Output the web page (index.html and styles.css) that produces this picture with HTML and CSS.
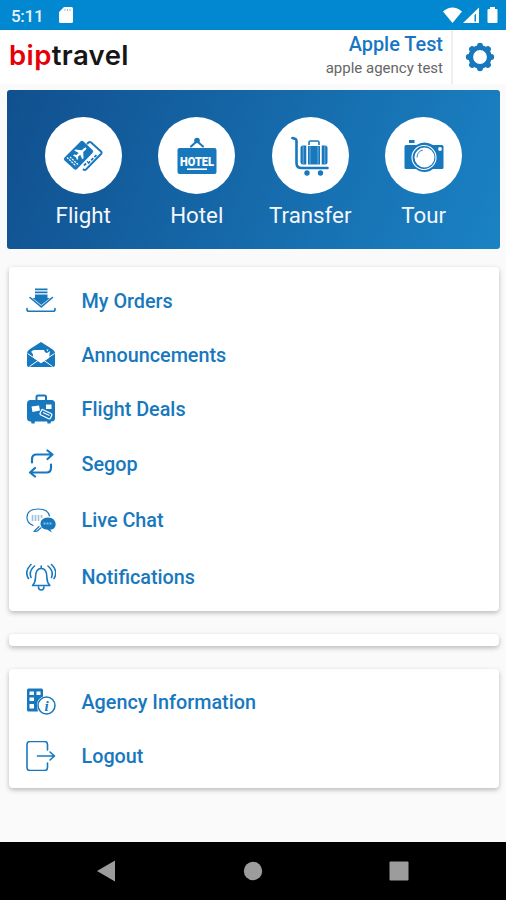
FILE: index.html
```html
<!DOCTYPE html>
<html lang="en">
<head>
  <meta charset="UTF-8">
  <meta name="viewport" content="width=device-width, initial-scale=1">
  <title>biptravel</title>
  <link rel="stylesheet" href="styles.css">
</head>
<body>

  <!-- Status bar -->
  <div class="status-bar">
    <span class="time">5:11</span>
    <svg class="sd-card" width="14" height="16" viewBox="0 0 14 16"><path fill="#fff" d="M5 0h7.500a1.500 1.500 0 0 1 1.500 1.500v13a1.500 1.500 0 0 1-1.500 1.500h-11A1.500 1.500 0 0 1 0 14.500V5z"/><path stroke="#7fc2e6" stroke-width="1" d="M6 2v2M8.500 2v2M11 2v2"/></svg>
    <svg class="signals" width="56" height="18" viewBox="0 0 56 18" fill="#fff">
      <path d="M1 5.500Q10.500-2.500 20 5.500L10.500 17z"/>
      <path d="M21 17L37 1.500V17zM32.500 9v6.500h1.500V7.500z" fill-rule="evenodd"/>
      <path d="M48 1h5v2h1.500q1 0 1 1v12q0 1-1 1h-8q-1 0-1-1V4q0-1 1-1H48z"/>
    </svg>
  </div>

  <!-- Header -->
  <div class="header">
    <div class="logo"><span>bip</span>travel</div>
    <div class="user">
      <div class="user-name">Apple Test</div>
      <div class="agency">apple agency test</div>
    </div>
    <div class="settings">
      <svg width="30" height="30" viewBox="0 0 30 30">
        <circle cx="15" cy="15" r="9.300" fill="none" stroke="#1878be" stroke-width="4.800"/>
        <path stroke="#1878be" stroke-width="6" stroke-linecap="round" d="M15 3.800v1M15 25.200v1M3.800 15h1M25.200 15h1M7.100 7.100l.7.700M22.200 22.200l.7.700M22.900 7.100l-.7.700M7.800 22.200l-.7.700"/>
      </svg>
    </div>
  </div>

  <!-- Main services -->
  <div class="services">
    <div class="service">
      <div class="circle">
        <svg width="40" height="32" viewBox="0 0 40 32">
          <path fill="#1878be" d="M17.500 1.500q1.500-1.500 3 0l9 8.500q1.500 1.500 0 3L14 29q-1.500 1.500-3 0L1.500 20.500q-1.500-1.500 0-3z"/>
          <path fill="none" stroke="#1878be" stroke-width="1.900" d="M24 4l1.500-1.500q1.300-1.200 2.600 0L38 11.500q1.200 1.200 0 2.500L23 29.500q-1.500 1-3-.5"/>
          <path stroke="#1878be" stroke-width="1.800" stroke-dasharray="3 1.500" d="M21 25.500l4-4M25 23.500l9-9"/>
          <g transform="translate(18 12.500) rotate(-42)" fill="#fff"><path d="M7 0Q7-1.100 5-1.100H2L-2-6h-1.600l1.500 4.900H-5L-6.500-3H-8l1 3-1 3h1.500L-5 1.100h2.900L-3.600 6H-2l4-4.900h3Q7 1.100 7 0z"/></g>
          <path stroke="#fff" stroke-width="1.200" stroke-dasharray="2 1" d="M4 17.500l9 8.500M7 17l8 7.500"/>
        </svg>
      </div>
      <span>Flight</span>
    </div>
    <div class="service">
      <div class="circle">
        <svg width="40" height="38" viewBox="0 0 40 38">
          <path fill="none" stroke="#1878be" stroke-width="2" stroke-linecap="round" d="M14 9.500l5-4.500h2l5 4.500"/>
          <circle cx="20" cy="3.500" r="2.800" fill="#1878be"/>
          <rect x=".5" y="11" width="39" height="26" rx="2" fill="#1878be"/>
          <text class="hotel-text" x="20" y="28.500" textLength="34" lengthAdjust="spacingAndGlyphs">HOTEL</text>
          <path stroke="#fff" stroke-width="1.600" d="M10 32.200h20"/>
        </svg>
      </div>
      <span>Hotel</span>
    </div>
    <div class="service">
      <div class="circle">
        <svg width="38" height="40" viewBox="0 0 38 40">
          <path fill="none" stroke="#1878be" stroke-width="2.600" stroke-linecap="round" stroke-linejoin="round" d="M1.500 2l3 1q1 .5 1 2v22q0 5 5 5H36.500"/>
          <path fill="none" stroke="#1878be" stroke-width="1.600" d="M18 9V6.500Q18 5 19.500 5h7Q28 5 28 6.500V9"/>
          <rect x="17" y="10" width="12" height="18.500" fill="#1878be"/>
          <path fill="#1878be" d="M15.300 9.500v19H12q-2.500 0-2.500-2.500V12q0-2.500 2.500-2.500zM30.700 9.500H34q2.500 0 2.500 2.500v14q0 2.500-2.500 2.500h-3.300z"/>
          <path stroke="#fff" stroke-width=".4" d="M12.200 10v18M33.800 10v18M19 10v18M27 10v18"/>
          <circle cx="16" cy="37" r="2.700" fill="#1878be"/>
          <circle cx="29.500" cy="37" r="2.700" fill="#1878be"/>
        </svg>
      </div>
      <span>Transfer</span>
    </div>
    <div class="service">
      <div class="circle">
        <svg width="40" height="34" viewBox="0 0 40 34">
          <path fill="#1878be" d="M5 1h5.500v3H5zM2 6h10.500Q16 3.500 20.500 3.500T29 6h9q1.500 0 1.500 1.500v21q0 1.500-1.500 1.500H29q-3.500 3-8.500 3T12 30H2Q.5 30 .5 28.500v-21Q.5 6 2 6z"/>
          <circle cx="20" cy="18.500" r="12" fill="none" stroke="#fff" stroke-width="1.100"/>
          <circle cx="20.500" cy="18.500" r="10" fill="#fff"/>
          <path fill="none" stroke="#1878be" stroke-width=".9" d="M13 18.500q.2-6 6-7.500"/>
          <circle cx="36" cy="10" r="1.900" fill="#fff"/>
        </svg>
      </div>
      <span>Tour</span>
    </div>
  </div>

  <!-- Main menu -->
  <div class="card menu">
    <a class="item">
      <svg width="30" height="30" viewBox="0 0 30 30">
        <path fill="#1878be" d="M9 2.500h12.500v1.800H9zM9 5.500h12.500v1.800H9zM9 8.500h12.500v3.500H24l-8.700 7-8.800-7H9z"/>
        <path class="line" d="M4 11.500l11.300 9.300L26.500 11.500"/>
        <path class="line" d="M1 22.500v1q0 1.800 2 1.800h24q2 0 2-1.800v-1"/>
      </svg>
      <span>My Orders</span>
    </a>
    <a class="item">
      <svg width="30" height="30" viewBox="0 0 30 30">
        <path fill="#1878be" d="M15 2l11 7q3 2 3 4v12q0 2-2 2H3q-2 0-2-2V13q0-2 3-4z"/>
        <path fill="#fff" d="M5 12q1.500-2 3.500-2H18q1 3.500 3 3l3-2-1 7-7.500 5q-.5.300-1 0L7 17.500Q7.500 13 5 12zM20.500 9.500h2l-1.200 2z"/>
        <path fill="none" stroke="#fff" stroke-width="1" d="M1.500 13.500L12 20.500 3.500 26.500M28.500 13.500L18 20.500l8.500 6"/>
      </svg>
      <span>Announcements</span>
    </a>
    <a class="item">
      <svg width="30" height="30" viewBox="0 0 30 30">
        <rect x="1" y="6" width="28" height="21.500" rx="3.500" fill="#1878be"/>
        <path fill="none" stroke="#1878be" stroke-width="2" d="M10.500 7V3Q10.500 1.500 12 1.500h6.500Q20 1.500 20 3v4"/>
        <path fill="#1878be" d="M5 27h4l-.5 2.500h-3zM21 27h4l-.5 2.500h-3z"/>
        <path fill="#fff" d="M5.500 12.500l7.500-1 1 5-7.500 1.500zM20 10.500h5.500v4.500H20z"/>
        <path fill="#1878be" stroke="#fff" stroke-width="1.300" d="M16.500 15.500l8.500 4q1.500 1 .5 2.500l-1 2q-.7 1.300-2.300.5L15 21q-1.500-.8-.7-2.200l1-2q.5-1.200 1.200-1.300z"/>
        <path stroke="#fff" stroke-width="1.200" d="M17 18.500l6.500 3"/>
      </svg>
      <span>Flight Deals</span>
    </a>
    <a class="item tall">
      <svg width="30" height="30" viewBox="0 0 30 30">
        <path class="line bold" d="M6 13.500V10q0-4.500 4.500-4.500H26M21.500 1.500l5 4-5 4.500M25 15.500V19q0 4.500-4.500 4.500H4.500M9 19l-5 4.500 5 4"/>
      </svg>
      <span>Segop</span>
    </a>
    <a class="item tall">
      <svg width="30" height="30" viewBox="0 0 30 30">
        <path class="line thin" d="M7 19.500q-6-2.500-6-8Q1 3 12.500 3q9.500 0 11 7M13 20.500L8 25.500l3-.3 4-3.500"/>
        <path stroke="#1878be" stroke-opacity=".45" stroke-width="1.600" d="M6.500 9v6M9.500 9v6M12.500 9v6M15.500 9v3"/>
        <path fill="#1878be" d="M21.800 11.500c10 0 10 12 2.500 12l1.700 3-5-3c-9-.5-8.500-12 .8-12z"/>
        <path stroke="#fff" stroke-opacity=".5" stroke-width="1.800" stroke-dasharray="2 1" d="M17.500 17.500h8"/>
      </svg>
      <span>Live Chat</span>
    </a>
    <a class="item tall">
      <svg width="30" height="30" viewBox="0 0 30 30">
        <path class="line" d="M6.500 23.500q3-3 3-8 0-9 5.700-9t5.700 9q0 5 3 8zM15.200 6.500V4M12.500 25q0 3 2.700 3t2.700-3"/>
        <path class="line" d="M5 2.500q-7 7-2.500 14M8.500 4q-6 5-3.500 11.500M25.500 2.500q7 7 2.500 14M22 4q6 5 3.500 11.500"/>
      </svg>
      <span>Notifications</span>
    </a>
  </div>

  <div class="card empty"></div>

  <!-- Account menu -->
  <div class="card account">
    <a class="item">
      <svg width="30" height="30" viewBox="0 0 30 30">
        <path fill="#1878be" d="M2.500 1.500h13Q17 1.500 17 3v6.500q-6 2.500-6 8.500 0 3.500 1 6.500H2.500Q1 24.500 1 23V3q0-1.500 1.500-1.500z"/>
        <path fill="#fff" d="M3.500 4.500H8V8H3.500zM10.500 4.500h4V8h-4zM3.500 10.500H8V14H3.500zM3.500 17H8v4.500H3.500z"/>
        <circle cx="20.500" cy="18.500" r="8.500" fill="#fff" stroke="#1878be" stroke-width="1.500"/>
        <text class="info-text" x="20.500" y="23.500">i</text>
      </svg>
      <span>Agency Information</span>
    </a>
    <a class="item">
      <svg width="30" height="30" viewBox="0 0 30 30">
        <path class="line" d="M21.500 9V3.500q0-3-3-3H4q-3 0-3 3v23q0 3 3 3h14.500q3 0 3-3V22M11.500 15H28M24 11l4.500 4-4.500 4"/>
      </svg>
      <span>Logout</span>
    </a>
  </div>

  <!-- Navigation bar -->
  <div class="nav-bar">
    <svg width="20" height="22" viewBox="0 0 20 22"><path fill="#9c9c9c" d="M19 .5v21L1 11z"/></svg>
    <svg width="20" height="20" viewBox="0 0 20 20"><circle cx="10" cy="10" r="9.200" fill="#9c9c9c"/></svg>
    <svg width="20" height="20" viewBox="0 0 20 20"><rect x=".5" y=".5" width="19" height="19" rx="1" fill="#9c9c9c"/></svg>
  </div>

</body>
</html>
```
FILE: styles.css
```css
* {
  box-sizing: border-box;
}
body {
  font-family: Roboto, sans-serif;
  background-color: #fafafa;
  display: flex;
  flex-direction: column;
  height: 900px;
  margin: 0;
  overflow: hidden;
}
svg {
  display: block;
  flex-shrink: 0;
}
.status-bar {
  height: 30px;
  background-color: #0288d1;
  color: #e6f4fb;
  display: flex;
  align-items: center;
  padding: 0 8px 0 11px;
}
.time {
  font-size: 17px;
  font-weight: 500;
  letter-spacing: -0.3px;
  padding-top: 2px;
  width: 48px;
}
.signals {
  margin-left: auto;
}
.header {
  height: 54px;
  background-color: white;
  display: flex;
}
.logo {
  font-family: Inter, sans-serif;
  font-size: 27.5px;
  font-weight: 600;
  letter-spacing: 0.4px;
  line-height: 35px;
  color: #161616;
  padding: 8px 0 0 9px;
}
.logo span {
  color: #e60008;
}
.user {
  margin-left: auto;
  text-align: right;
  padding-right: 8px;
  border-right: 2px solid #eee;
}
.user-name {
  font-size: 19.9px;
  font-weight: 500;
  line-height: 24px;
  padding-top: 3px;
  color: #1976c5;
}
.agency {
  font-size: 15px;
  line-height: 22px;
  color: #666;
}
.settings {
  width: 53px;
  display: flex;
  justify-content: center;
  align-items: center;
}
.services {
  height: 159px;
  margin: 6px 6px 0 7px;
  padding-top: 27px;
  border-radius: 3px;
  background: linear-gradient(110deg, #11508f, #1a82c4);
  display: grid;
  grid-template-columns: repeat(4, 113.5px);
  justify-content: center;
}
.service {
  display: flex;
  flex-direction: column;
  align-items: center;
  color: #f3f7fc;
  font-size: 22.3px;
  line-height: 26px;
}
.circle {
  width: 77px;
  height: 77px;
  margin-bottom: 8px;
  border-radius: 50%;
  background-color: white;
  display: flex;
  justify-content: center;
  align-items: center;
}
.hotel-text {
  font-size: 13px;
  font-weight: 900;
  fill: white;
  text-anchor: middle;
}
.card {
  margin: 0 7px 0 9px;
  background-color: white;
  border-radius: 4px;
  box-shadow: 0 2px 5px rgba(0, 0, 0, 0.26);
}
.menu {
  height: 344px;
  margin-top: 18px;
  padding-top: 7px;
}
.empty {
  height: 12px;
  margin-top: 23px;
}
.account {
  height: 119px;
  margin-top: 23px;
  padding-top: 6px;
}
.item {
  height: 54px;
  padding-left: 17px;
  display: flex;
  align-items: center;
  gap: 25.5px;
  color: #1878be;
  font-size: 19.8px;
  font-weight: 500;
}
.item.tall {
  height: 56.5px;
}
.line {
  fill: none;
  stroke: #1878be;
  stroke-width: 1.6;
  stroke-linecap: round;
  stroke-linejoin: round;
}
.line.bold {
  stroke-width: 2.2;
}
.line.thin {
  stroke-width: 1.2;
}
.info-text {
  font-family: "Liberation Serif", serif;
  font-size: 15px;
  font-style: italic;
  font-weight: bold;
  fill: #1878be;
  text-anchor: middle;
}
.nav-bar {
  height: 58px;
  margin-top: auto;
  background-color: black;
  display: flex;
  justify-content: space-between;
  align-items: center;
  padding: 0 97px 0 96px;
}
```
